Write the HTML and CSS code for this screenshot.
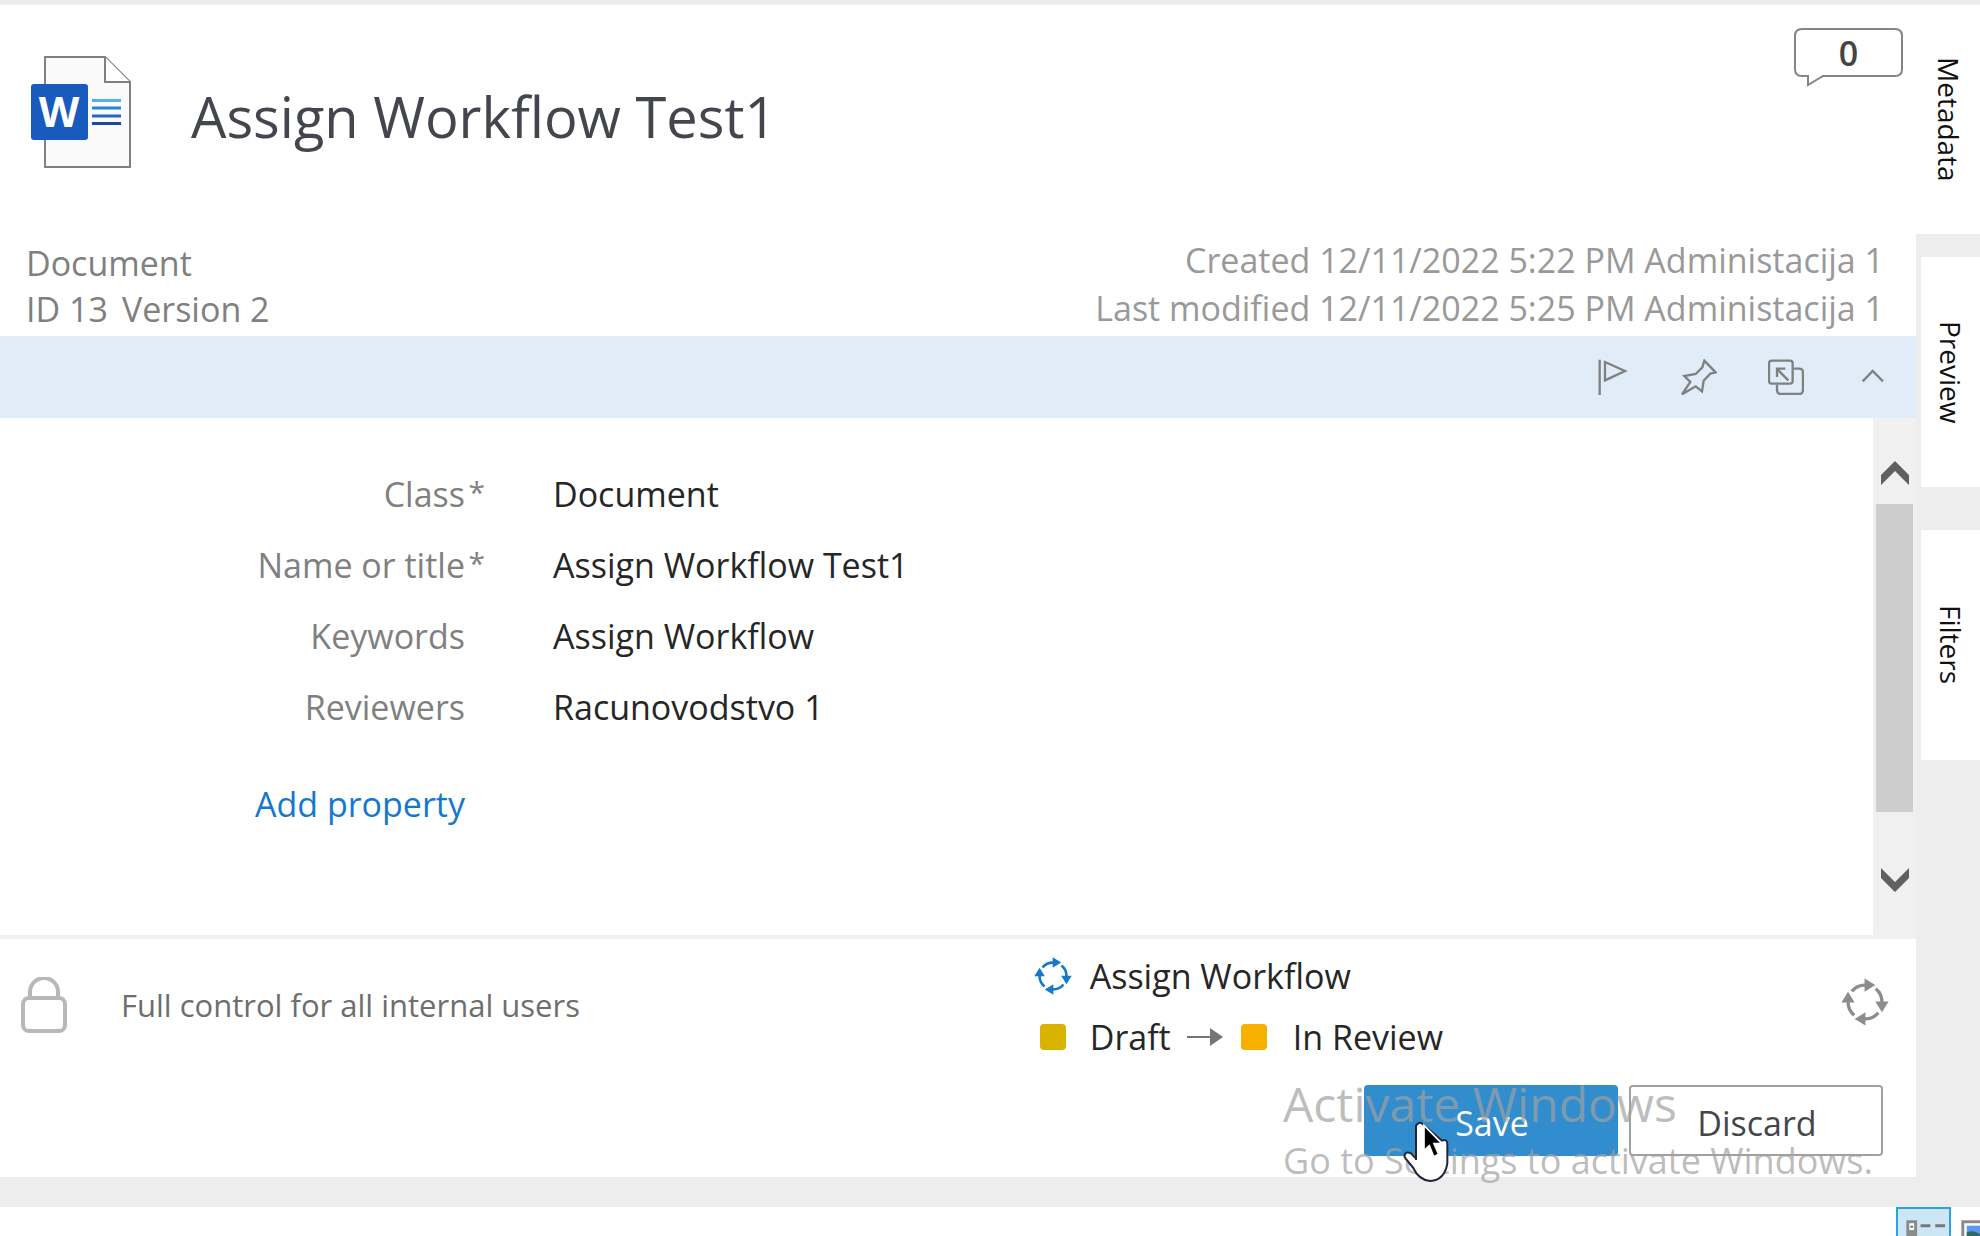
FILE: index.html
```html
<!DOCTYPE html>
<html lang="en">
<head>
<meta charset="utf-8">
<title>Assign Workflow Test1</title>
<link rel="stylesheet" href="styles.css">
</head>
<body>
<svg class="defs" aria-hidden="true">
  <symbol id="cycle" viewBox="100 79 116 116">
    <g id="cycle-arm">
      <path d="M126 111A41 41 0 0 1 158 96" fill="none" stroke="currentColor" stroke-width="8"/>
      <path d="M157 80L183 96L157 112Z" fill="currentColor"/>
    </g>
    <use href="#cycle-arm" transform="rotate(90 158 137)"/>
    <use href="#cycle-arm" transform="rotate(180 158 137)"/>
    <use href="#cycle-arm" transform="rotate(270 158 137)"/>
  </symbol>
</svg>
<div class="workspace">
  <main class="card">
    <header class="card-header">
      <svg class="doc-icon" viewBox="31 56 101 118" aria-hidden="true">
        <path d="M45 57H105L130 82V167H45Z" fill="#fafafa" stroke="#80807c" stroke-width="2"/>
        <path d="M105 57V82H130" fill="#fff" stroke="#80807c" stroke-width="2"/>
        <rect x="31" y="84" width="57" height="56" rx="3" fill="#185abd"/>
        <text x="59" y="127" class="doc-letter">W</text>
        <path d="M92 100.500H121" stroke="#50b0f0" stroke-width="3"/>
        <path d="M92 108H121" stroke="#2b84d8" stroke-width="3"/>
        <path d="M92 116H121" stroke="#2468c4" stroke-width="3"/>
        <path d="M92 123.500H121" stroke="#20489a" stroke-width="3"/>
      </svg>
      <h1 class="title">Assign Workflow Test1</h1>
      <button class="comments" aria-label="Comments">
        <svg viewBox="0 0 109 59" aria-hidden="true"><path d="M8 1H101Q108 1 108 8V41Q108 48 101 48H29L14 57V48H8Q1 48 1 41V8Q1 1 8 1Z" fill="#fff" stroke="#858585" stroke-width="2"/></svg>
        <span class="comments-count">0</span>
      </button>
    </header>
    <section class="meta">
      <div class="meta-left"><p>Document</p><p><span>ID 13</span><span class="version">Version 2</span></p></div>
      <div class="meta-right"><p>Created 12/11/2022 5:22 PM Administacija 1</p><p>Last modified 12/11/2022 5:25 PM Administacija 1</p></div>
    </section>
    <nav class="toolbar">
      <button aria-label="Follow"><svg viewBox="100 86 108 108"><path d="M117 88V194M133 95L193 122L133 150Z"/></svg></button>
      <button aria-label="Pin"><svg viewBox="366 86 108 108"><path d="M436 91L470 126L454 130L434 151L429 183L410 168L369 192L394 155L376 137L410 131L430 111Z"/></svg></button>
      <button aria-label="Pop out"><svg viewBox="625 86 108 108"><rect x="628" y="91" width="71" height="69" rx="8"/><path d="M702 115H718Q730 115 730 127V178Q730 191 718 191H665Q652 191 652 178V163M686 150L652 116M652 140V115H677"/></svg></button>
      <button aria-label="Collapse"><svg viewBox="885 86 108 108"><path d="M908 153L938 122L969 153"/></svg></button>
    </nav>
    <section class="properties">
      <div class="fields">
        <dl class="field-list">
          <dt>Class<span class="required">*</span></dt><dd>Document</dd>
          <dt>Name or title<span class="required">*</span></dt><dd>Assign Workflow Test1</dd>
          <dt>Keywords</dt><dd>Assign Workflow</dd>
          <dt>Reviewers</dt><dd>Racunovodstvo 1</dd>
        </dl>
        <a class="add-property" href="#">Add property</a>
      </div>
      <div class="scrollbar">
        <button class="scroll-up" aria-label="Scroll up"><svg viewBox="0 0 28 24"><path d="M0 14L14 0L28 14V24L14 10L0 24Z"/></svg></button>
        <div class="thumb"></div>
        <button class="scroll-down" aria-label="Scroll down"><svg viewBox="0 0 28 24"><path d="M0 0L14 14L28 0V10L14 24L0 10Z"/></svg></button>
      </div>
    </section>
    <footer class="card-footer">
      <div class="status">
        <div class="access">
          <svg class="lock" viewBox="0 0 46 56"><path d="M9 21V15A14 14 0 0 1 37 15V21" /><rect x="2" y="21" width="42" height="33" rx="6"/></svg>
          <span>Full control for all internal users</span>
        </div>
        <div class="workflow">
          <svg class="wf-icon"><use href="#cycle"/></svg>
          <span>Assign Workflow</span>
          <span class="state draft"></span>
          <div class="transition">
            <span>Draft</span>
            <svg class="arrow" viewBox="0 0 36 18"><path d="M0 9H25" stroke="#757575" stroke-width="2"/><path d="M23 0L36 9L23 18Z" fill="#757575"/></svg>
            <span class="state review"></span>
            <span>In Review</span>
          </div>
        </div>
        <button class="change-state" aria-label="Change state"><svg><use href="#cycle"/></svg></button>
      </div>
      <div class="actions">
        <button class="btn save">Save</button>
        <button class="btn discard">Discard</button>
      </div>
      <div class="watermark"><p class="watermark-title">Activate Windows</p><p>Go to Settings to activate Windows.</p></div>
      <svg class="pointer" viewBox="70 30 144 189" aria-hidden="true">
        <path d="M112 150V47Q123 30 135 45L190 92Q206 86 206 102V160Q198 210 155 213Q120 210 104 174L78 142Q76 122 97 130L112 146" fill="#fff" stroke="#23233a" stroke-width="6" stroke-linejoin="round"/>
        <path d="M136 46V122L152 107L165 140L180 133L166 101H190Z" fill="#000" stroke="#fff" stroke-width="5"/>
      </svg>
    </footer>
  </main>
  <aside class="tabs">
    <button class="tab active">Metadata</button>
    <button class="tab">Preview</button>
    <button class="tab filters">Filters</button>
  </aside>
</div>
<div class="viewbar">
  <button class="view selected" aria-label="Details view"><svg viewBox="0 0 52 52"><g fill="#fff" stroke="#8a8a8a" stroke-width="3"><rect x="10" y="13" width="8" height="10"/><rect x="10" y="26" width="8" height="10"/></g><path d="M23 17H33M38 17H48M23 29H33M38 29H48" stroke="#777" stroke-width="3"/><path d="M14 17V19" stroke="#3c8a78" stroke-width="3"/></svg></button>
  <button class="view" aria-label="Thumbnail view"><svg viewBox="0 0 52 52"><rect x="10" y="13" width="40" height="34" fill="#fff" stroke="#8a8a8a" stroke-width="3"/><rect x="14" y="17" width="32" height="26" fill="#5b98f2"/><path d="M14 24Q22 20 30 28H46V43H14Z" fill="#2f6b60"/></svg></button>
</div>
</body>
</html>
```
FILE: styles.css
```css
* { box-sizing: border-box; }
body {
  margin: 0;
  height: 100vh;
  overflow: hidden;
  background: #fff;
  color: #262626;
  font: 34px/46px "Open Sans", "Noto Sans", sans-serif;
}
p, h1, dl, dd { margin: 0; }
svg { display: block; }
button {
  padding: 0;
  border: 0;
  background: none;
  color: inherit;
  font: inherit;
}
.defs { position: absolute; width: 0; height: 0; }
.workspace {
  display: grid;
  grid-template-columns: 1fr 64px;
  padding: 5px 0 30px;
  background: #ededed;
}
.card { background: #fff; }

.card-header {
  display: flex;
  align-items: flex-start;
  padding: 51px 13px 62px 31px;
}
.doc-icon { width: 101px; height: 118px; }
.doc-letter {
  fill: #fff;
  font-size: 42px;
  font-weight: 700;
  text-anchor: middle;
}
.title {
  flex: 1;
  padding: 22px 0 0 59px;
  color: #43464c;
  font-size: 56px;
  font-weight: 400;
  line-height: 76px;
}
.comments {
  display: grid;
  margin-top: -28px;
  color: #444;
  font-weight: 600;
  font-size: 34px;
}
.comments svg { grid-area: 1 / 1; width: 109px; height: 59px; }
.comments-count { grid-area: 1 / 1; line-height: 50px; }

.meta {
  display: flex;
  align-items: flex-end;
  justify-content: space-between;
  padding: 0 32px 4px 26px;
  color: #808080;
}
.version { margin-left: 14px; }
.meta-right {
  color: #999;
  line-height: 48px;
  text-align: right;
}

.toolbar {
  display: flex;
  align-items: center;
  justify-content: flex-end;
  gap: 51px;
  height: 82px;
  padding-right: 25px;
  background: #e0ecf8;
}
.toolbar svg {
  width: 36px;
  height: 36px;
  fill: none;
  stroke: #808080;
  stroke-width: 7;
}

.properties {
  display: grid;
  grid-template-columns: 1fr 43px;
  border-bottom: 4px solid #f1f1f1;
}
.fields { padding-top: 41px; line-height: 71px; }
.field-list {
  display: grid;
  grid-template-columns: 465px 1fr;
  column-gap: 88px;
  margin-bottom: 26px;
}
.field-list dt { color: #808080; text-align: right; }
.required {
  display: inline-block;
  width: 20px;
  margin-right: -20px;
  font-size: 30px;
  line-height: 30px;
  vertical-align: 4px;
}
.add-property {
  display: block;
  width: 465px;
  color: #1478cc;
  text-align: right;
  text-decoration: none;
}
.scrollbar {
  display: flex;
  flex-direction: column;
  background: #f0f0f0;
}
.scrollbar button { display: grid; justify-content: center; }
.scrollbar svg { width: 28px; height: 24px; fill: #606060; }
.scroll-up { height: 86px; padding-top: 43px; }
.scroll-down { height: 123px; padding-top: 56px; }
.thumb {
  height: 308px;
  margin: 0 3px;
  background: #cdcdcd;
}

.card-footer {
  position: relative;
  padding: 6px 33px 21px 21px;
}
.status {
  display: grid;
  grid-template-columns: 54% 1fr auto;
  align-items: center;
  margin-right: -6px;
}
.access {
  display: flex;
  align-items: center;
  gap: 54px;
  padding-bottom: 2px;
  color: #6e6e6e;
  font-size: 31px;
}
.lock {
  width: 46px;
  height: 56px;
  fill: none;
  stroke: #b8b8b8;
  stroke-width: 4;
}
.workflow {
  display: grid;
  grid-template-columns: 38px 1fr;
  grid-auto-rows: 61px;
  column-gap: 18px;
  align-items: center;
  padding-left: 4px;
}
.wf-icon { width: 38px; height: 38px; color: #1478cc; }
.state { width: 26px; height: 26px; border-radius: 4px; }
.draft { margin: 0 auto; background: #d8b400; }
.review { margin: 0 10px 0 2px; background: #f8b000; }
.transition { display: flex; align-items: center; gap: 16px; }
.arrow { width: 36px; height: 18px; }
.change-state { padding-bottom: 8px; color: #8c8c8c; }
.change-state svg { width: 48px; height: 48px; }
.actions {
  display: flex;
  justify-content: flex-end;
  gap: 11px;
  padding-top: 18px;
}
.btn {
  width: 254px;
  height: 71px;
  padding: 5px 0 0 2px;
  border-radius: 4px;
}
.save { background: #318dcd; color: #fff; }
.discard { border: 2px solid #a0a0a0; background: #fff; color: #44464c; }
.watermark {
  position: absolute;
  right: 34px;
  bottom: -11px;
  width: 599px;
  color: rgba(160, 160, 160, 0.7);
  font-size: 36px;
  line-height: 54px;
  white-space: nowrap;
  pointer-events: none;
}
.watermark-title { font-size: 48px; line-height: 60px; }
.pointer {
  position: absolute;
  right: 466px;
  bottom: -6px;
  width: 48px;
  height: 63px;
}

.tabs {
  display: flex;
  flex-direction: column;
  align-items: flex-end;
}
.tab {
  width: 59px;
  height: 230px;
  background: #fff;
  color: #111;
  font-size: 28px;
  line-height: 59px;
  writing-mode: vertical-rl;
}
.tab.active { width: 100%; height: 229px; margin-bottom: 23px; }
.filters { margin-top: 43px; }

.viewbar { display: flex; justify-content: flex-end; }
.view { width: 55px; height: 55px; border: 2px solid transparent; }
.view.selected { border-color: #2ba3df; background: #cce6f5; }
.view:last-child { margin-right: -26px; }
.view svg { width: 51px; height: 51px; }
```
